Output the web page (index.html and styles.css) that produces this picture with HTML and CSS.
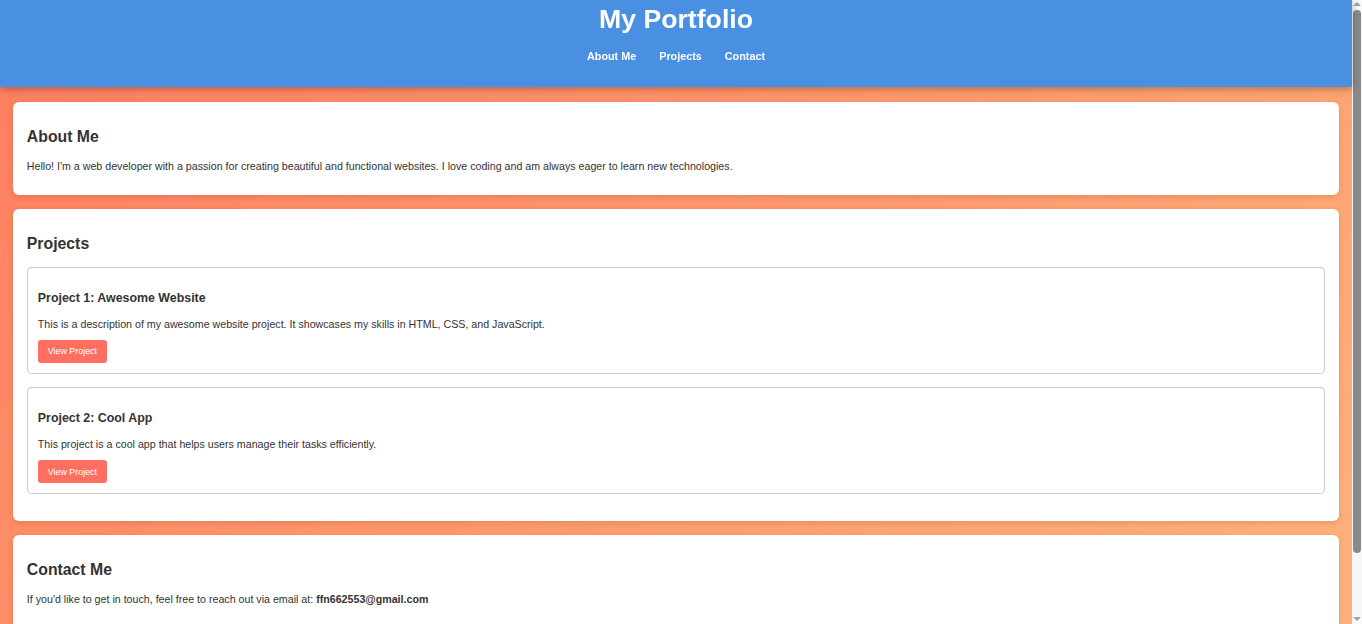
FILE: index.html
```html
<!DOCTYPE html>
<html lang="en">
<head>
<meta charset="utf-8">
<title>My Portfolio</title>
<link rel="stylesheet" href="styles.css">
</head>
<body>
<div class="page">
  <header class="site-header">
    <h1 class="site-title">My Portfolio</h1>
    <nav>
      <ul class="nav-list">
        <li><a href="#about">About Me</a></li>
        <li><a href="#projects">Projects</a></li>
        <li><a href="#contact">Contact</a></li>
      </ul>
    </nav>
  </header>
  <main class="content">
    <section class="card" id="about">
      <h2>About Me</h2>
      <p>Hello! I'm a web developer with a passion for creating beautiful and functional websites. I love coding and am always eager to learn new technologies.</p>
    </section>
    <section class="card" id="projects">
      <h2>Projects</h2>
      <div class="project">
        <h3>Project 1: Awesome Website</h3>
        <p>This is a description of my awesome website project. It showcases my skills in HTML, CSS, and JavaScript.</p>
        <a class="btn" href="#">View Project</a>
      </div>
      <div class="project">
        <h3>Project 2: Cool App</h3>
        <p>This project is a cool app that helps users manage their tasks efficiently.</p>
        <a class="btn" href="#">View Project</a>
      </div>
    </section>
    <section class="card" id="contact">
      <h2>Contact Me</h2>
      <p>If you'd like to get in touch, feel free to reach out via email at: <a class="email" href="mailto:ffn662553@gmail.com">ffn662553@gmail.com</a></p>
    </section>
  </main>
  <footer class="site-footer">
    <p>&copy; 2024 My Portfolio. All rights reserved.</p>
  </footer>
</div>
<div class="scrollbar" aria-hidden="true">
  <span class="arrow arrow-up"></span>
  <span class="thumb"></span>
  <span class="arrow arrow-down"></span>
</div>
</body>
</html>
```

FILE: styles.css
```css
body {
  margin: 0;
  font-family: "Liberation Sans", Arial, sans-serif;
  font-size: 10.67px;
  color: #333;
  background: linear-gradient(135deg, #ff7e5f, #feb47b);
}
.page {
  margin-right: 10px;
}
.site-header {
  background: #4a90e2;
  color: #fff;
  text-align: center;
  padding: 4px 0 25px;
  box-shadow: 0 2px 8px rgba(0, 0, 0, 0.3);
  position: relative;
  z-index: 1;
}
.site-title {
  margin: 0;
  font-size: 26.67px;
  font-weight: bold;
}
.nav-list {
  list-style: none;
  margin: 14.5px 0 0;
  padding: 0;
  display: flex;
  justify-content: center;
  gap: 23px;
}
.nav-list a {
  color: #fff;
  text-decoration: none;
  font-weight: bold;
  font-size: 10.8px;
}
.content {
  padding: 15px 13.33px 0;
  display: flex;
  flex-direction: column;
  gap: 13.5px;
}
.card {
  background: #fff;
  border-radius: 6px;
  padding: 13.5px;
  box-shadow: 0 2px 6px rgba(0, 0, 0, 0.12);
  display: flow-root;
}
.card h2 {
  font-size: 15.8px;
  margin: 12.5px 0 14.5px;
}
.card > p {
  margin: 0 0 9.8px;
}
.project {
  border: 1px solid #ccc;
  border-radius: 4px;
  padding: 10px;
  margin-bottom: 13.3px;
  display: flow-root;
}
.project h3 {
  font-size: 12.4px;
  margin: 12.5px 0 12.8px;
}
.project p {
  margin: 0 0 10px;
}
.btn {
  display: inline-block;
  background: #ff6f61;
  color: #fff;
  text-decoration: none;
  font-size: 8.9px;
  padding: 6.8px 10px;
  border-radius: 3px;
}
.email {
  color: #333;
  font-weight: bold;
  text-decoration: none;
}
.site-footer {
  margin-top: 14px;
  background: #4a90e2;
  color: #fff;
  text-align: center;
  padding: 13px 0;
}
.site-footer p {
  margin: 0;
}
.scrollbar {
  position: fixed;
  top: 0;
  right: 0;
  width: 10px;
  height: 100%;
  background: #f8f8f8;
}
.thumb {
  position: absolute;
  top: 10px;
  left: 1px;
  width: 8px;
  height: 543px;
  border-radius: 4px;
  background: #8a8a8a;
}
.arrow {
  position: absolute;
  left: 1px;
  width: 0;
  height: 0;
  border-left: 4px solid transparent;
  border-right: 4px solid transparent;
}
.arrow-up {
  top: 2px;
  border-bottom: 4px solid #a3a3a3;
}
.arrow-down {
  bottom: 3px;
  border-top: 4px solid #a3a3a3;
}
```
